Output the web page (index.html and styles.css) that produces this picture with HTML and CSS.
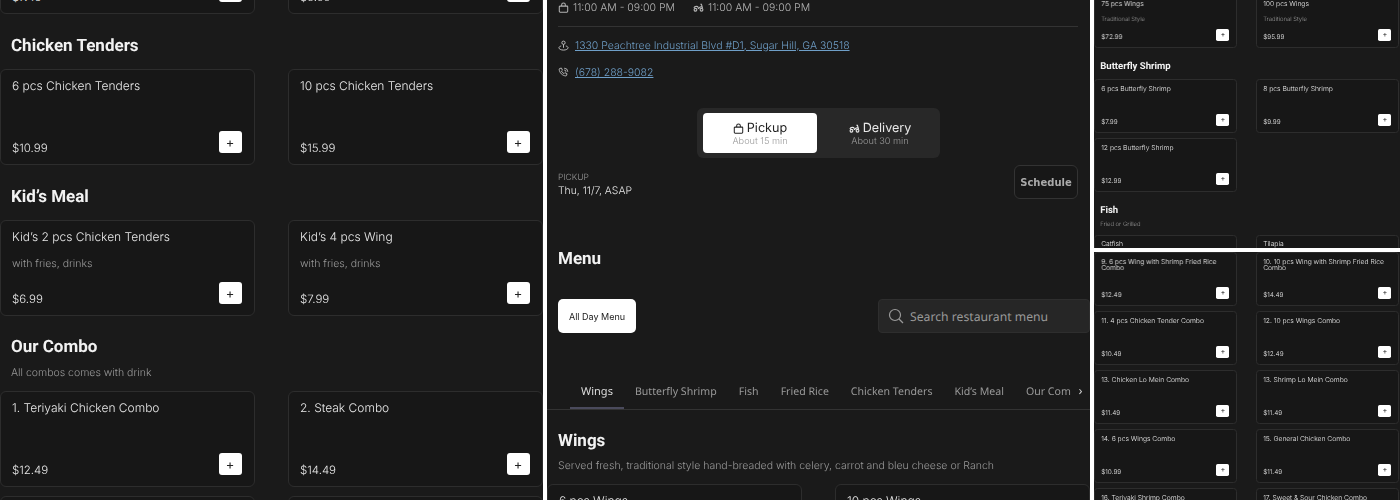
FILE: index.html
```html
<!DOCTYPE html>
<html lang="en">
<head>
  <meta charset="UTF-8" />
  <title>Restaurant menu</title>
  <link rel="stylesheet" href="styles.css">
</head>
<body>

  <svg class="defs" width="0" height="0">
    <symbol id="bag" viewBox="0 0 12 12"><path d="M2 4.500h8a.6.6 0 0 1 .6.6v5a1 1 0 0 1-1 1H2.400a1 1 0 0 1-1-1v-5a.6.6 0 0 1 .6-.6zM4 4.500V3a2 2 0 0 1 4 0v1.500" fill="none" stroke="currentColor" stroke-width="1.100"/></symbol>
    <symbol id="scooter" viewBox="0 0 12 12"><g fill="none" stroke="currentColor" stroke-width="1.200"><circle cx="2.700" cy="8.500" r="1.500"/><circle cx="9.300" cy="8.500" r="1.500"/><path d="M1 6.500c.5-1.500 2.500-2 4.200-1.500l.8 2.500M8 2.500h1.200l1.300 4.500M6 7.500c.7-1.500 1.800-2.300 3.500-2.500"/></g></symbol>
    <symbol id="pin" viewBox="0 0 12 12"><g fill="none" stroke="currentColor" stroke-width="1"><circle cx="6" cy="3" r="1.800"/><path d="M6 4.800v3.700M3.500 6.500c-1.600.4-2.500 1.200-2.500 2 0 1.300 2.200 2.500 5 2.500s5-1.200 5-2.500c0-.8-.9-1.600-2.500-2"/></g></symbol>
    <symbol id="phone" viewBox="0 0 12 12"><g fill="none" stroke="currentColor" stroke-width="1"><path d="M2.200 1.500 3.800 1.200l1 2.300-1 .9c.5 1.300 1.400 2.200 2.800 2.800l.9-1 2.300 1-.3 1.700c-.1.500-.5.800-1 .8C4.800 9.500 1.500 6.200 1.300 2.500c0-.5.400-.9.900-1z"/><path d="M6.800 1.300a4 4 0 0 1 3.900 3.900M6.800 3.300a2 2 0 0 1 1.900 1.900"/></g></symbol>
    <symbol id="search" viewBox="0 0 16 16"><circle cx="7" cy="7" r="5.500" fill="none" stroke="currentColor" stroke-width="1.200"/><path d="m11 11 4 4" stroke="currentColor" stroke-width="1.200"/></symbol>
  </svg>

  <main class="shots">

    <!-- first shot, scrolled down the menu -->
    <section class="panel">
      <div class="menu-list menu-list-first">
        <div class="item-grid">
          <div class="item"><h4>Shrimp Fried Rice</h4><div class="item-foot"><span>$7.49</span><button class="add">+</button></div></div>
          <div class="item"><h4>Steak Fried Rice</h4><div class="item-foot"><span>$5.99</span><button class="add">+</button></div></div>
        </div>

        <h3 class="cat">Chicken Tenders</h3>
        <div class="item-grid">
          <div class="item"><h4>6 pcs Chicken Tenders</h4><div class="item-foot"><span>$10.99</span><button class="add">+</button></div></div>
          <div class="item"><h4>10 pcs Chicken Tenders</h4><div class="item-foot"><span>$15.99</span><button class="add">+</button></div></div>
        </div>

        <h3 class="cat">Kid’s Meal</h3>
        <div class="item-grid">
          <div class="item"><h4>Kid’s 2 pcs Chicken Tenders</h4><p>with fries, drinks</p><div class="item-foot"><span>$6.99</span><button class="add">+</button></div></div>
          <div class="item"><h4>Kid’s 4 pcs Wing</h4><p>with fries, drinks</p><div class="item-foot"><span>$7.99</span><button class="add">+</button></div></div>
        </div>

        <h3 class="cat cat-with-note">Our Combo</h3>
        <p class="cat-note">All combos comes with drink</p>
        <div class="item-grid">
          <div class="item"><h4>1. Teriyaki Chicken Combo</h4><div class="item-foot"><span>$12.49</span><button class="add">+</button></div></div>
          <div class="item"><h4>2. Steak Combo</h4><div class="item-foot"><span>$14.49</span><button class="add">+</button></div></div>
          <div class="item"><h4>3. Combo</h4><div class="item-foot"><span>$12.49</span><button class="add">+</button></div></div>
          <div class="item"><h4>4. Combo</h4><div class="item-foot"><span>$12.49</span><button class="add">+</button></div></div>
        </div>
      </div>
    </section>

    <!-- second shot, restaurant header -->
    <section class="panel">
      <div class="info">
        <div class="hours">
          <span class="hour"><svg class="ico"><use href="#bag"/></svg>11:00 AM - 09:00 PM</span>
          <span class="hour"><svg class="ico"><use href="#scooter"/></svg>11:00 AM - 09:00 PM</span>
        </div>
        <div class="contact"><svg class="ico"><use href="#pin"/></svg><a href="#">1330 Peachtree Industrial Blvd #D1, Sugar Hill, GA 30518</a></div>
        <div class="contact"><svg class="ico"><use href="#phone"/></svg><a href="#">(678) 288-9082</a></div>

        <div class="toggle">
          <div class="toggle-opt active">
            <strong><svg class="ico-sm"><use href="#bag"/></svg>Pickup</strong>
            <small>About 15 min</small>
          </div>
          <div class="toggle-opt">
            <strong><svg class="ico-sm"><use href="#scooter"/></svg>Delivery</strong>
            <small>About 30 min</small>
          </div>
        </div>

        <div class="when">
          <div>
            <div class="when-label">PICKUP</div>
            <div class="when-value">Thu, 11/7, ASAP</div>
          </div>
          <button class="schedule">Schedule</button>
        </div>
      </div>

      <h2 class="menu-title">Menu</h2>
      <div class="menu-bar">
        <button class="menu-pick">All Day Menu</button>
        <div class="search"><svg class="search-ico"><use href="#search"/></svg>Search restaurant menu</div>
      </div>

      <nav class="tabs">
        <a class="tab active" href="#">Wings</a>
        <a class="tab" href="#">Butterfly Shrimp</a>
        <a class="tab" href="#">Fish</a>
        <a class="tab" href="#">Fried Rice</a>
        <a class="tab" href="#">Chicken Tenders</a>
        <a class="tab" href="#">Kid’s Meal</a>
        <a class="tab" href="#">Our Combo</a>
        <span class="tabs-more">›</span>
      </nav>

      <div class="menu-list">
        <h3 class="cat cat-with-note">Wings</h3>
        <p class="cat-note cat-note-long">Served fresh, traditional style hand-breaded with celery, carrot and bleu cheese or Ranch</p>
        <div class="item-grid">
          <div class="item"><h4>6 pcs Wings</h4></div>
          <div class="item"><h4>10 pcs Wings</h4></div>
        </div>
      </div>
    </section>

    <!-- last column holds two smaller shots -->
    <section class="panel-stack">
      <div class="panel mini">
        <div class="menu-list menu-list-mini-a">
          <div class="item-grid">
            <div class="item"><h4>75 pcs Wings</h4><p>Traditional Style</p><div class="item-foot"><span>$72.99</span><button class="add">+</button></div></div>
            <div class="item"><h4>100 pcs Wings</h4><p>Traditional Style</p><div class="item-foot"><span>$95.99</span><button class="add">+</button></div></div>
          </div>

          <h3 class="cat">Butterfly Shrimp</h3>
          <div class="item-grid">
            <div class="item"><h4>6 pcs Butterfly Shrimp</h4><div class="item-foot"><span>$7.99</span><button class="add">+</button></div></div>
            <div class="item"><h4>8 pcs Butterfly Shrimp</h4><div class="item-foot"><span>$9.99</span><button class="add">+</button></div></div>
            <div class="item"><h4>12 pcs Butterfly Shrimp</h4><div class="item-foot"><span>$12.99</span><button class="add">+</button></div></div>
          </div>

          <h3 class="cat cat-with-note">Fish</h3>
          <p class="cat-note">Fried or Grilled</p>
          <div class="item-grid">
            <div class="item"><h4>Catfish</h4></div>
            <div class="item"><h4>Tilapia</h4></div>
          </div>
        </div>
      </div>

      <div class="panel mini">
        <div class="menu-list">
          <div class="item-grid">
            <div class="item"><h4>9. 6 pcs Wing with Shrimp Fried Rice Combo</h4><div class="item-foot"><span>$12.49</span><button class="add">+</button></div></div>
            <div class="item"><h4>10. 10 pcs Wing with Shrimp Fried Rice Combo</h4><div class="item-foot"><span>$14.49</span><button class="add">+</button></div></div>
            <div class="item"><h4>11. 4 pcs Chicken Tender Combo</h4><div class="item-foot"><span>$10.49</span><button class="add">+</button></div></div>
            <div class="item"><h4>12. 10 pcs Wings Combo</h4><div class="item-foot"><span>$12.49</span><button class="add">+</button></div></div>
            <div class="item"><h4>13. Chicken Lo Mein Combo</h4><div class="item-foot"><span>$11.49</span><button class="add">+</button></div></div>
            <div class="item"><h4>13. Shrimp Lo Mein Combo</h4><div class="item-foot"><span>$11.49</span><button class="add">+</button></div></div>
            <div class="item"><h4>14. 6 pcs Wings Combo</h4><div class="item-foot"><span>$10.99</span><button class="add">+</button></div></div>
            <div class="item"><h4>15. General Chicken Combo</h4><div class="item-foot"><span>$11.49</span><button class="add">+</button></div></div>
            <div class="item"><h4>16. Teriyaki Shrimp Combo</h4></div>
            <div class="item"><h4>17. Sweet &amp; Sour Chicken Combo</h4></div>
          </div>
        </div>
      </div>
    </section>

  </main>

</body>
</html>
```

FILE: styles.css
```css
* {
  box-sizing: border-box;
}

html,
body {
  height: 100%;
}

body {
  margin: 0;
  background: white;
  color: #eee;
  font-family: 'Inter', 'Open Sans', sans-serif;
  text-rendering: geometricPrecision;
  overflow: hidden;
}

.defs {
  display: block;
  height: 0;
}

.shots {
  display: flex;
  gap: 4px;
  height: 500px;
}

.panel {
  flex: 0 0 543px;
  background: #1a1a1a;
  overflow: hidden;
}

/* own layer, keeps the small text grey instead of coloured */
.panel > * {
  will-change: opacity;
}

.panel-stack {
  flex: 0 0 306px;
  display: flex;
  flex-direction: column;
  gap: 4px;
}

.mini {
  zoom: 0.5625;
  flex: 0 0 441px;
  filter: grayscale(1);
}

/* menu sections */
.menu-list-first {
  margin-top: -82px;
}

.menu-list-mini-a {
  margin-top: -10px;
}

.cat {
  margin: 0;
  padding: 23px 11px 13px;
  font-family: 'Roboto', sans-serif;
  font-size: 17px;
  line-height: 19px;
  font-weight: 700;
  color: #f2f2f2;
}

.cat-with-note {
  padding-top: 22px;
  padding-bottom: 4px;
}

.mini .cat {
  padding-top: 25px;
  padding-bottom: 11px;
}

.mini .cat-with-note {
  padding-bottom: 1px;
}

.cat-note {
  margin: 0;
  padding: 5px 11px 11px;
  font-size: 10.500px;
  line-height: 14px;
  font-weight: 300;
  color: #9a9a9a;
}

.cat-note-long {
  margin-top: -1px;
}

.item-grid {
  display: grid;
  grid-template-columns: 254.500px 254.500px;
  gap: 9px 33.500px;
}

.item {
  height: 96px;
  display: flex;
  flex-direction: column;
  padding: 10px 12px 10px 11px;
  background: #171717;
  border: 1px solid #2d2d2d;
  border-radius: 6px;
  overflow: hidden;
}

.item h4 {
  margin: 0;
  font-size: 12px;
  line-height: 11px;
  font-weight: 300;
  color: #e8e8e8;
}

.item p {
  margin: 15px 0 0;
  font-size: 10.500px;
  line-height: 14px;
  font-weight: 300;
  color: #9a9a9a;
}

.item-foot {
  margin-top: auto;
  display: flex;
  justify-content: space-between;
  align-items: flex-end;
  font-size: 11.500px;
  line-height: 14px;
  font-weight: 300;
  color: #e8e8e8;
}

.item-foot span {
  margin-bottom: -1px;
}

.add {
  width: 23px;
  height: 22px;
  margin-bottom: 1px;
  padding: 0;
  background: white;
  color: #222;
  border: none;
  border-radius: 3px;
  font-size: 13px;
  line-height: 20px;
  font-family: 'Inter', sans-serif;
}

/* restaurant info */
.info {
  padding: 0 12px 0 11px;
}

.hours {
  display: flex;
  gap: 18px;
  height: 27px;
  padding: 1px 0 12px;
  border-bottom: 1px solid #333;
  font-size: 10.500px;
  line-height: 14px;
  font-weight: 300;
  color: #b4b4b4;
}

.hour {
  display: flex;
  align-items: center;
  gap: 3px;
}

.ico {
  width: 11px;
  height: 11px;
  margin-right: 1px;
  flex: none;
}

.contact {
  display: flex;
  align-items: center;
  gap: 5px;
  margin-top: 11px;
  height: 14px;
  font-size: 10.500px;
  font-weight: 300;
  color: #c4c4c4;
}

.contact + .contact {
  margin-top: 13px;
}

.contact a {
  color: #6f9fc8;
}

.toggle {
  display: flex;
  gap: 6px;
  width: 243px;
  height: 50px;
  margin: 29px auto 0 139px;
  padding: 5px 6px;
  background: #282828;
  border-radius: 6px;
}

.toggle-opt {
  flex: 0 0 114px;
  display: flex;
  flex-direction: column;
  align-items: center;
  justify-content: center;
  padding-top: 1px;
  border-radius: 4px;
  color: #e8e8e8;
}

.toggle-opt.active {
  background: white;
  color: #222;
  filter: grayscale(1);
}

.toggle-opt strong {
  display: flex;
  align-items: center;
  gap: 3px;
  font-size: 12.600px;
  line-height: 15px;
  font-weight: 400;
}

.ico-sm {
  width: 11px;
  height: 11px;
}

.toggle-opt small {
  font-size: 9.200px;
  line-height: 11px;
  font-weight: 300;
  color: #9a9a9a;
}

.when {
  display: flex;
  justify-content: space-between;
  align-items: flex-start;
  margin-top: 7px;
}

.when > div {
  padding-top: 8px;
}

.when-label {
  font-size: 8.500px;
  line-height: 11px;
  font-weight: 300;
  color: #999;
}

.when-value {
  font-size: 10.400px;
  line-height: 14px;
  font-weight: 300;
  color: #e8e8e8;
}

.schedule {
  width: 64px;
  height: 34px;
  padding: 0;
  background: #171717;
  color: #aaa;
  border: 1px solid #333;
  border-radius: 6px;
  font-family: 'DejaVu Sans', sans-serif;
  font-size: 10px;
  font-weight: 700;
}

/* menu head */
.menu-title {
  margin: 49px 0 0;
  padding-left: 11px;
  font-family: 'Roboto', sans-serif;
  font-size: 17px;
  line-height: 22px;
  font-weight: 700;
  color: #f2f2f2;
}

.menu-bar {
  display: flex;
  justify-content: space-between;
  margin-top: 29px;
  padding-left: 11px;
}

.menu-pick {
  width: 78px;
  height: 34px;
  padding: 0;
  background: white;
  color: #222;
  border: none;
  border-radius: 5px;
  font-family: 'Inter', sans-serif;
  font-size: 9px;
  filter: grayscale(1);
}

.search {
  display: flex;
  align-items: center;
  gap: 6px;
  width: 212px;
  height: 34px;
  padding-left: 9px;
  background: #262626;
  border: 1px solid #2e2e2e;
  border-radius: 4px;
  font-family: 'Noto Sans', sans-serif;
  font-size: 12.200px;
  color: #999;
}

.search-ico {
  width: 16px;
  height: 16px;
}

.tabs {
  display: flex;
  align-items: flex-start;
  gap: 22px;
  height: 50px;
  margin-top: 27px;
  padding: 25px 0 0 34px;
  border-bottom: 1px solid #333;
  overflow: hidden;
  position: relative;
  font-family: 'Noto Sans', sans-serif;
  font-size: 10.600px;
  line-height: 15px;
  white-space: nowrap;
}

.tab {
  color: #999;
  text-decoration: none;
}

.tab.active {
  margin-top: -1px;
  color: #ddd;
  font-size: 11px;
  position: relative;
}

.tab.active::after {
  content: "";
  position: absolute;
  left: -11px;
  right: -11px;
  top: 23px;
  height: 2px;
  background: #4a4a5c;
}

.tabs-more {
  position: absolute;
  right: 0;
  top: 23px;
  width: 19px;
  height: 20px;
  background: #1a1a1a;
  color: #ccc;
  text-align: center;
  font-size: 13px;
}
```
